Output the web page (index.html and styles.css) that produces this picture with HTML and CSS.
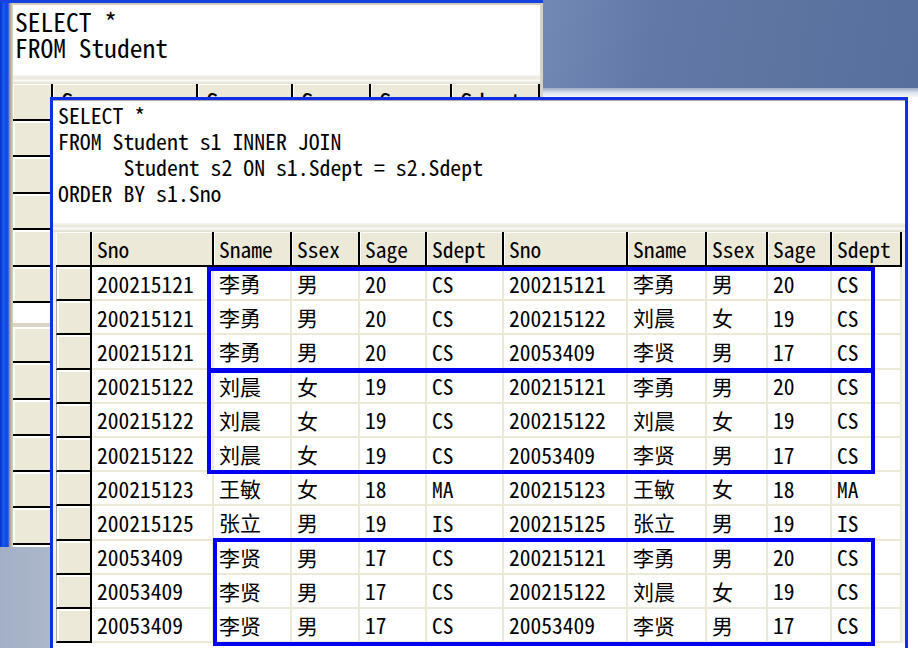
FILE: index.html
```html
<!DOCTYPE html>
<html lang="zh-CN">
<head>
<meta charset="utf-8">
<title>自身连接查询</title>
<link rel="stylesheet" href="styles.css">
</head>
<body>
<div class="stage">
  <div class="desk-top"></div>
  <div class="desk-band"></div>
  <div class="desk-bl"></div>

  <section class="win-back">
    <div class="frame-l"></div>
    <div class="frame-g"></div>
    <div class="back-body">
      <pre class="sql sql-back">SELECT *
FROM Student</pre>
      <div class="splitter"></div>
      <div class="bgrid">
        <div class="bh"></div><div class="bh">Sno</div><div class="bh">Sname</div><div class="bh">Ssex</div><div class="bh">Sage</div><div class="bh">Sdept</div>
        <div class="brh"></div><div class="bc"></div><div class="bc"></div><div class="bc"></div><div class="bc"></div><div class="bc"></div>
        <div class="brh"></div><div class="bc"></div><div class="bc"></div><div class="bc"></div><div class="bc"></div><div class="bc"></div>
        <div class="brh"></div><div class="bc"></div><div class="bc"></div><div class="bc"></div><div class="bc"></div><div class="bc"></div>
        <div class="brh"></div><div class="bc"></div><div class="bc"></div><div class="bc"></div><div class="bc"></div><div class="bc"></div>
        <div class="brh"></div><div class="bc"></div><div class="bc"></div><div class="bc"></div><div class="bc"></div><div class="bc"></div>
        <div class="bgap"></div>
        <div class="brh"></div><div class="bc"></div><div class="bc"></div><div class="bc"></div><div class="bc"></div><div class="bc"></div>
        <div class="brh"></div><div class="bc"></div><div class="bc"></div><div class="bc"></div><div class="bc"></div><div class="bc"></div>
        <div class="brh"></div><div class="bc"></div><div class="bc"></div><div class="bc"></div><div class="bc"></div><div class="bc"></div>
        <div class="brh"></div><div class="bc"></div><div class="bc"></div><div class="bc"></div><div class="bc"></div><div class="bc"></div>
        <div class="brh"></div><div class="bc"></div><div class="bc"></div><div class="bc"></div><div class="bc"></div><div class="bc"></div>
        <div class="brh"></div><div class="bc"></div><div class="bc"></div><div class="bc"></div><div class="bc"></div><div class="bc"></div>
      </div>
    </div>
  </section>

  <section class="win-front">
    <div class="front-body">
      <pre class="sql sql-front">SELECT *
FROM Student s1 INNER JOIN
      Student s2 ON s1.Sdept = s2.Sdept
ORDER BY s1.Sno</pre>
      <div class="splitter"></div>
      <div class="grid-wrap">
        <div class="grid">
          <div class="h"></div><div class="h">Sno</div><div class="h">Sname</div><div class="h">Ssex</div><div class="h">Sage</div><div class="h">Sdept</div><div class="h">Sno</div><div class="h">Sname</div><div class="h">Ssex</div><div class="h">Sage</div><div class="h">Sdept</div>

          <div class="rh"></div><div class="c">200215121</div><div class="c cj">李勇</div><div class="c cj">男</div><div class="c">20</div><div class="c">CS</div><div class="c">200215121</div><div class="c cj">李勇</div><div class="c cj">男</div><div class="c">20</div><div class="c">CS</div>
          <div class="rh"></div><div class="c">200215121</div><div class="c cj">李勇</div><div class="c cj">男</div><div class="c">20</div><div class="c">CS</div><div class="c">200215122</div><div class="c cj">刘晨</div><div class="c cj">女</div><div class="c">19</div><div class="c">CS</div>
          <div class="rh"></div><div class="c">200215121</div><div class="c cj">李勇</div><div class="c cj">男</div><div class="c">20</div><div class="c">CS</div><div class="c">20053409</div><div class="c cj">李贤</div><div class="c cj">男</div><div class="c">17</div><div class="c">CS</div>
          <div class="rh"></div><div class="c">200215122</div><div class="c cj">刘晨</div><div class="c cj">女</div><div class="c">19</div><div class="c">CS</div><div class="c">200215121</div><div class="c cj">李勇</div><div class="c cj">男</div><div class="c">20</div><div class="c">CS</div>
          <div class="rh"></div><div class="c">200215122</div><div class="c cj">刘晨</div><div class="c cj">女</div><div class="c">19</div><div class="c">CS</div><div class="c">200215122</div><div class="c cj">刘晨</div><div class="c cj">女</div><div class="c">19</div><div class="c">CS</div>
          <div class="rh"></div><div class="c">200215122</div><div class="c cj">刘晨</div><div class="c cj">女</div><div class="c">19</div><div class="c">CS</div><div class="c">20053409</div><div class="c cj">李贤</div><div class="c cj">男</div><div class="c">17</div><div class="c">CS</div>
          <div class="rh"></div><div class="c">200215123</div><div class="c cj">王敏</div><div class="c cj">女</div><div class="c">18</div><div class="c">MA</div><div class="c">200215123</div><div class="c cj">王敏</div><div class="c cj">女</div><div class="c">18</div><div class="c">MA</div>
          <div class="rh"></div><div class="c">200215125</div><div class="c cj">张立</div><div class="c cj">男</div><div class="c">19</div><div class="c">IS</div><div class="c">200215125</div><div class="c cj">张立</div><div class="c cj">男</div><div class="c">19</div><div class="c">IS</div>
          <div class="rh"></div><div class="c">20053409</div><div class="c cj">李贤</div><div class="c cj">男</div><div class="c">17</div><div class="c">CS</div><div class="c">200215121</div><div class="c cj">李勇</div><div class="c cj">男</div><div class="c">20</div><div class="c">CS</div>
          <div class="rh"></div><div class="c">20053409</div><div class="c cj">李贤</div><div class="c cj">男</div><div class="c">17</div><div class="c">CS</div><div class="c">200215122</div><div class="c cj">刘晨</div><div class="c cj">女</div><div class="c">19</div><div class="c">CS</div>
          <div class="rh"></div><div class="c">20053409</div><div class="c cj">李贤</div><div class="c cj">男</div><div class="c">17</div><div class="c">CS</div><div class="c">20053409</div><div class="c cj">李贤</div><div class="c cj">男</div><div class="c">17</div><div class="c">CS</div>
        </div>
      </div>
    </div>
  </section>

  <div class="hl hl-1"></div>
  <div class="hl hl-2"></div>
  <div class="hl hl-3"></div>
</div>
</body>
</html>
```
FILE: styles.css
```css
* { box-sizing: border-box; }
html, body { margin: 0; padding: 0; }
body {
  background: #fff;
  color: #000;
  font-family: "Noto Sans Mono CJK SC", "Liberation Mono", "Noto Sans CJK SC", monospace;
}
.stage {
  position: relative;
  width: 918px;
  height: 648px;
  overflow: hidden;
  background: #fff;
}

/* slide background pieces */
.desk-top {
  position: absolute;
  left: 543px; top: 0;
  width: 375px; height: 88px;
  background: linear-gradient(100deg, #7289b6 0%, #6279a7 30%, #5d74a1 65%, #566f9c 100%);
}
.desk-band {
  position: absolute;
  left: 543px; top: 88px;
  width: 375px; height: 9px;
  background: linear-gradient(#9dabc8, #dfe4ee 55%, #f6f7fa);
}
.desk-bl {
  position: absolute;
  left: 0; top: 547px;
  width: 50px; height: 101px;
  background: linear-gradient(90deg, #a3afc5, #acb7cb);
}

/* back window */
.win-back {
  position: absolute;
  left: 0; top: 0;
  width: 543px; height: 547px;
  display: flex;
  border-top: 3px solid #1642e2;
  background: #fff;
}
.frame-l {
  width: 9px;
  background: linear-gradient(90deg, #0630c4 0%, #1a5cf4 40%, #0b40e2 78%, #4e6fd8 100%);
}
.frame-g {
  width: 4px;
  background: linear-gradient(90deg, #8d8b81, #b9b6aa 50%, #dcd9ce);
}
.back-body {
  flex: 1;
  display: flex;
  flex-direction: column;
  border-top: 2px solid #cfccc0;
  border-right: 3px solid #d6d3c6;
  min-width: 0;
}
.sql {
  margin: 0;
  white-space: pre;
  color: #000;
  background: #fff;
  font-family: "Noto Sans Mono CJK SC", "Liberation Mono", monospace;
}
.sql-back {
  height: 70px;
  padding: 3px 0 0 2px;
  font-size: 25.5px;
  line-height: 26px;
}
.splitter {
  height: 9px;
  background: linear-gradient(#f8f7f2, #e8e6db 35%, #fbfaf6 60%, #dedbce);
}
.bgrid {
  display: grid;
  grid-template-columns: 40px 145px 95px 78px 81px 1fr;
  grid-template-rows: repeat(6, 36.5px) 24px repeat(6, 36.3px);
}
.bh {
  background: #ece9d8;
  border-right: 2px solid #000;
  border-bottom: 2px solid #000;
  box-shadow: inset 1px 1px 0 #fff;
  padding-left: 8px;
  display: flex;
  align-items: center;
  font-size: 25px;
}
.brh {
  background: #ece9d8;
  border-right: 2px solid #000;
  border-bottom: 2px solid #000;
  box-shadow: inset 2px 2px 0 #fff;
}
.bc {
  background: #fff;
  border-right: 2px solid #ece9d8;
  border-bottom: 2px solid #ece9d8;
}
.bgap {
  grid-column: 1 / -1;
  background: #fff;
  border-bottom: 4px solid #d9d6c9;
}

/* front window */
.win-front {
  position: absolute;
  left: 50px; top: 97px;
  width: 858px; height: 560px;
  border: 3px solid #0f2ee8;
  border-bottom: none;
  background: #fff;
}
.front-body {
  display: flex;
  flex-direction: column;
  border-top: 1px solid #b3b0a3;
}
.sql-front {
  height: 122px;
  padding: 1px 0 0 5px;
  font-size: 21.8px;
  line-height: 26px;
}
.grid-wrap {
  padding-left: 3px;
  background: #f3f2ec;
}
.grid {
  display: grid;
  grid-template-columns: 36px 122px 78px 68px 67px 77px 124px 79px 61px 64px 70px;
  grid-template-rows: 35px repeat(11, 34.2px);
}
.h {
  background: #ece9d8;
  border-right: 2px solid #000;
  border-bottom: 2px solid #000;
  box-shadow: inset 1px 1px 0 #fff;
  padding-left: 5px;
  display: flex;
  align-items: center;
  font-size: 21.5px;
  white-space: nowrap;
  overflow: hidden;
}
.rh {
  background: #ece9d8;
  border-left: 1px solid #a9a79c;
  border-right: 2px solid #000;
  border-bottom: 2px solid #000;
  box-shadow: inset 2px 2px 0 #fff;
}
.c {
  background: #fff;
  border-right: 2px solid #ece9d8;
  border-bottom: 2px solid #ece9d8;
  padding-left: 5px;
  display: flex;
  align-items: center;
  font-size: 21.5px;
  white-space: nowrap;
  overflow: hidden;
}
.cj {
  font-family: "Noto Sans CJK SC", sans-serif;
  font-size: 21px;
}

/* highlight boxes */
.hl {
  position: absolute;
  border: 4px solid #0000f0;
}
.hl-1 { left: 207px; top: 267px; width: 668px; height: 105px; }
.hl-2 { left: 207px; top: 369px; width: 668px; height: 105px; }
.hl-3 { left: 213px; top: 538px; width: 662px; height: 108px; }
```
